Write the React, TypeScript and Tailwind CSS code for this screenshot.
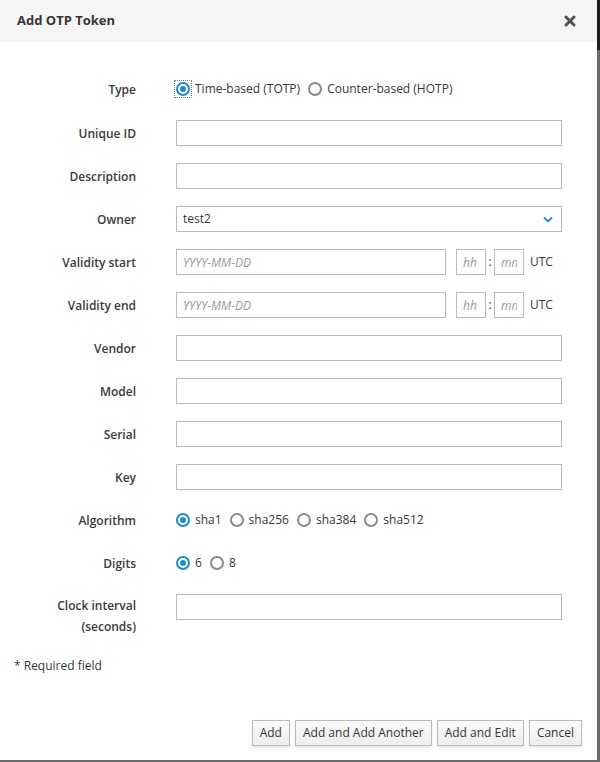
import React from "react";

type RadioOpt = { label: string; checked?: boolean; focused?: boolean };

function Radio({ label, checked, focused }: RadioOpt) {
  return (
    <label className="flex items-center gap-[5px] mr-[8px]">
      <span
        className={
          focused
            ? "flex items-center justify-center outline-1 outline-offset-1 outline-dotted outline-[#4a90c0]"
            : "flex items-center justify-center"
        }
      >
        <span
          className={
            checked
              ? "flex h-[14px] w-[14px] items-center justify-center rounded-full border-2 border-[#1f8ccf] bg-white"
              : "flex h-[14px] w-[14px] items-center justify-center rounded-full border-2 border-[#8a8a8a] bg-white"
          }
        >
          {checked && <span className="h-[6px] w-[6px] rounded-full bg-[#1f8ccf]" />}
        </span>
      </span>
      <span>{label}</span>
    </label>
  );
}

function Row({ label, children, tall }: { label: React.ReactNode; children: React.ReactNode; tall?: boolean }) {
  return (
    <div className={tall ? "flex items-start" : "flex h-[26px] items-center"}>
      <div
        className={
          tall
            ? "w-[136px] shrink-0 pt-[2px] text-right font-semibold leading-[21px] text-[#3a3a3a]"
            : "w-[136px] shrink-0 text-right font-semibold leading-[21px] text-[#3a3a3a]"
        }
      >
        {label}
      </div>
      <div className="ml-[40px] flex w-[386px] items-center">{children}</div>
    </div>
  );
}

function TextInput({ placeholder, className }: { placeholder?: string; className?: string }) {
  return (
    <input
      placeholder={placeholder}
      className={
        "h-[26px] border border-[#bbbbbb] bg-white px-[6px] text-[12px] outline-none placeholder:italic placeholder:text-[#999999] " +
        (className ?? "w-full")
      }
    />
  );
}

function DateTime() {
  return (
    <div className="flex items-center">
      <TextInput placeholder="YYYY-MM-DD" className="w-[270px]" />
      <TextInput placeholder="hh" className="ml-[10px] w-[30px]" />
      <span className="mx-[1px] w-[6px] text-center">:</span>
      <TextInput placeholder="mm" className="w-[30px]" />
      <span className="ml-[6px]">UTC</span>
    </div>
  );
}

function Btn({ children }: { children: React.ReactNode }) {
  return (
    <button className="h-[26px] border border-[#bbbbbb] bg-gradient-to-b from-[#fafafa] to-[#ededed] px-[7px] text-[12px] text-[#363636] shadow-[0_2px_3px_rgba(0,0,0,0.1)]">
      {children}
    </button>
  );
}

export default function App() {
  return (
    <div
      className="flex h-[762px] w-[600px] bg-[#6a6a6a] text-[12px] text-[#363636]"
      style={{ fontFamily: '"Open Sans", "Noto Sans", sans-serif' }}
    >
      <div className="flex h-[760px] w-[597px] flex-col bg-white">
        <header className="flex h-[42px] items-center justify-between bg-[#f5f5f5] pl-[17px] pr-[21px]">
          <h1 className="text-[13px] font-bold text-[#363636]">Add OTP Token</h1>
          <svg width="12" height="12" viewBox="0 0 12 12" className="text-[#4d5258]">
            <path d="M2 2 L10 10 M10 2 L2 10" stroke="currentColor" strokeWidth="3" strokeLinecap="round" />
          </svg>
        </header>

        <div className="flex flex-col gap-[17px] pt-[34px]">
          <Row label="Type">
            <Radio label="Time-based (TOTP)" checked focused />
            <Radio label="Counter-based (HOTP)" />
          </Row>
          <div className="mt-px flex flex-col gap-[17px]">
            <Row label="Unique ID">
              <TextInput />
            </Row>
            <Row label="Description">
              <TextInput />
            </Row>
            <Row label="Owner">
              <div className="flex h-[26px] w-full items-center justify-between border border-[#bbbbbb] bg-white pl-[6px] pr-[8px]">
                <span>test2</span>
                <svg width="10" height="7" viewBox="0 0 10 7">
                  <path d="M1 1.5 L5 5.5 L9 1.5" fill="none" stroke="#1f8ccf" strokeWidth="1.8" />
                </svg>
              </div>
            </Row>
            <Row label="Validity start">
              <DateTime />
            </Row>
            <Row label="Validity end">
              <DateTime />
            </Row>
            <Row label="Vendor">
              <TextInput />
            </Row>
            <Row label="Model">
              <TextInput />
            </Row>
            <Row label="Serial">
              <TextInput />
            </Row>
            <Row label="Key">
              <TextInput />
            </Row>
            <Row label="Algorithm">
              <Radio label="sha1" checked />
              <Radio label="sha256" />
              <Radio label="sha384" />
              <Radio label="sha512" />
            </Row>
            <Row label="Digits">
              <Radio label="6" checked />
              <Radio label="8" />
            </Row>
            <Row label={<><div>Clock interval</div><div>(seconds)</div></>} tall>
              <div className="w-full pt-px">
                <TextInput />
              </div>
            </Row>
          </div>
        </div>

        <p className="mt-[20px] pl-[14px]">* Required field</p>

        <footer className="mt-[45px] flex justify-end gap-[5px] pr-[15px]">
          <Btn>Add</Btn>
          <Btn>Add and Add Another</Btn>
          <Btn>Add and Edit</Btn>
          <Btn>Cancel</Btn>
        </footer>
      </div>
      <div className="flex flex-1 flex-col">
        <div className="h-[50px] bg-[#1d1d1d]" />
        <div className="flex-1 bg-[#6a6a6a]" />
      </div>
    </div>
  );
}
